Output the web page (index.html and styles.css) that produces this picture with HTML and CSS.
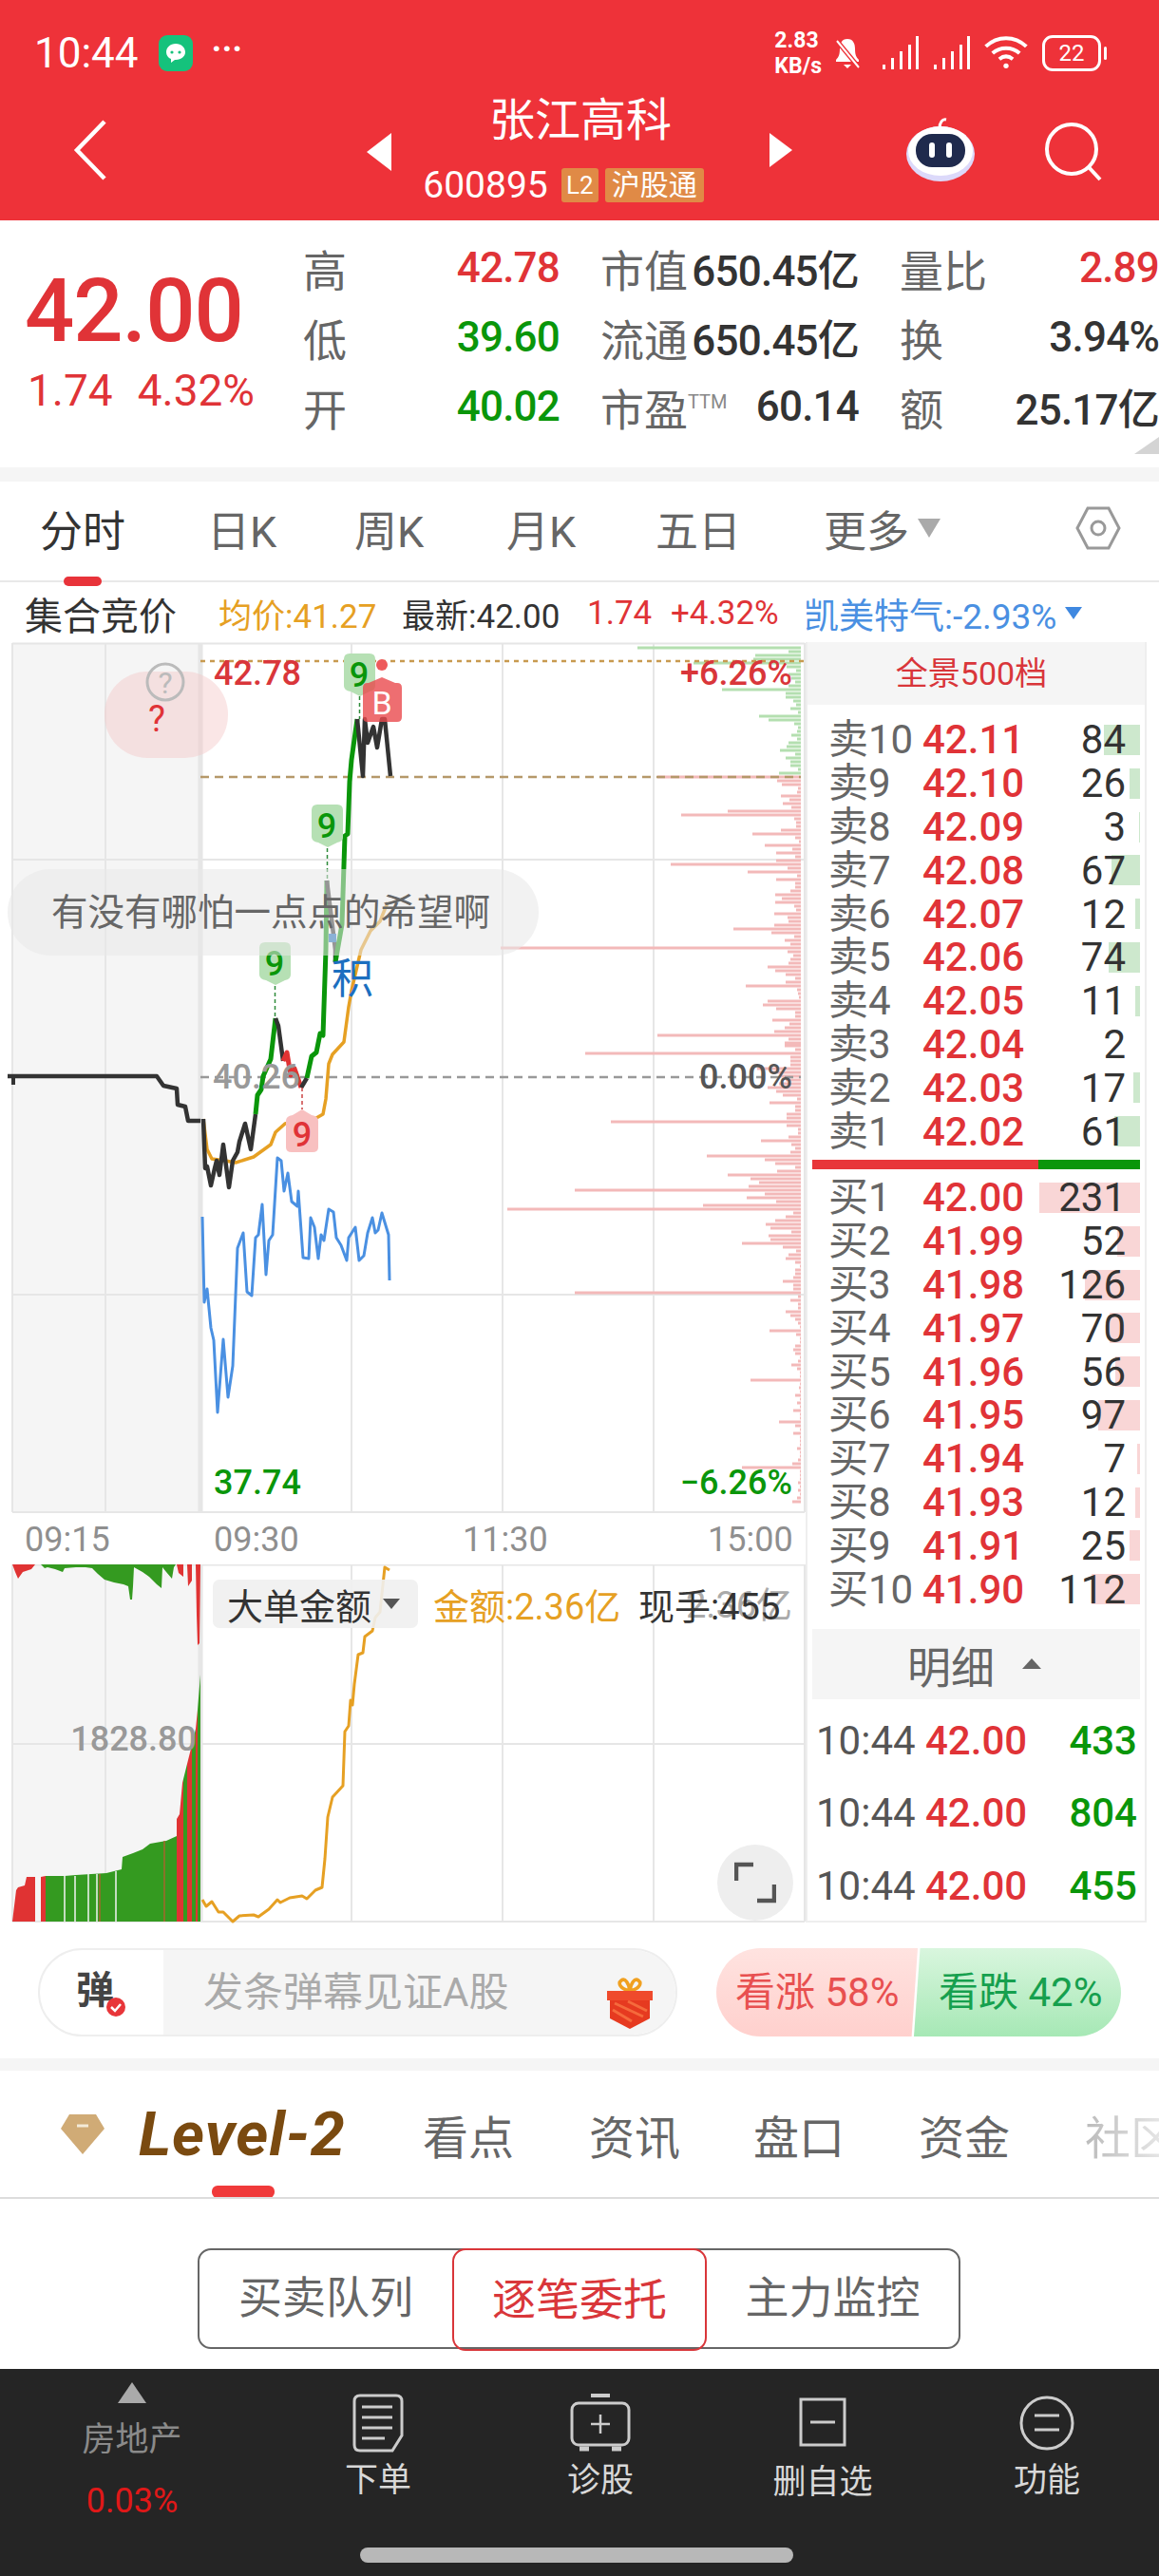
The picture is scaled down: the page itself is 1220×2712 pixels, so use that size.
FILE: index.html
```html
<!DOCTYPE html>
<html lang="zh-CN">
<head>
    <meta charset="UTF-8">
    <meta name="viewport" content="width=device-width, initial-scale=1.0">
    <title>张江高科 600895</title>
    <link rel="stylesheet" href="styles.css">
</head>
<body>
<div id="app">
    <!-- 顶部红色区域 -->
    <header class="top">
        <div class="status">
            <span class="clock">10:44</span>
            <svg class="wechat" width="36" height="38" viewBox="0 0 36 38"><rect width="36" height="38" rx="9" fill="#15c27c"/><path d="M18 9c-6 0-10 4-10 9 0 3 2 6 5 7v4l4-3h1c6 0 10-4 10-8 0-5-4-9-10-9z" fill="#fff"/><circle cx="14" cy="18" r="1.6" fill="#15c27c"/><circle cx="22" cy="18" r="1.6" fill="#15c27c"/></svg>
            <span class="more-dots">···</span>
            <span class="status-right">
                <span class="speed">2.83<br>KB/s</span>
                <svg class="bell" width="30" height="38" viewBox="0 0 30 38"><path d="M15 4c-6 0-8 5-8 10 0 6-1 9-4 12v2h24v-2c-3-3-4-6-4-12 0-5-2-10-8-10zM11 31h8l-4 4z" fill="#fff"/><path d="M4 6l23 28" stroke="#ee3239" stroke-width="5"/><path d="M4 6l23 28" stroke="#fff" stroke-width="2"/></svg>
                <svg class="signal" width="42" height="36" viewBox="0 0 42 36"><path d="M2 30h3v5H2zM11 23h3v12h-3zM20 16h3v19h-3zM29 9h3v26h-3zM37 0h3v35h-3z" fill="#fff"/></svg>
                <svg class="signal" width="42" height="36" viewBox="0 0 42 36"><path d="M2 30h3v5H2zM11 23h3v12h-3zM20 16h3v19h-3zM29 9h3v26h-3zM37 0h3v35h-3z" fill="#fff"/></svg>
                <svg width="48" height="38" viewBox="0 0 54 42" fill="none" stroke="#fff" stroke-width="4.500"><path d="M3 13c14-13 34-13 48 0M11 21c9-8 23-8 32 0M19 28c5-4 11-4 16 0"/><circle cx="27" cy="36" r="3" fill="#fff" stroke="none"/></svg>
                <span class="battery">22</span>
            </span>
        </div>
        <nav class="nav">
            <div class="nav-left">
                <svg width="36" height="64" viewBox="0 0 36 64" fill="none" stroke="#fff" stroke-width="4.500"><path d="M33 2L4 32l29 30"/></svg>
            </div>
            <div class="nav-mid">
                <svg class="arrow" width="26" height="40" viewBox="0 0 26 40"><path d="M26 0v40L0 20z" fill="#fff"/></svg>
                <div class="stock">
                    <div class="stock-name">张江高科</div>
                    <div class="stock-code">600895<span class="badge">L2</span><span class="badge badge-wide">沪股通</span></div>
                </div>
                <svg class="arrow" width="24" height="36" viewBox="0 0 24 36"><path d="M0 0v36l24-18z" fill="#fff"/></svg>
            </div>
            <div class="nav-right">
                <svg class="robot" width="74" height="68" viewBox="0 0 74 68">
                    <path d="M36 12c0-6 3-10 7-9" fill="none" stroke="#fff" stroke-width="3"/>
                    <ellipse cx="37" cy="39" rx="36" ry="29" fill="#dcd9fa"/>
                    <ellipse cx="37" cy="36" rx="34" ry="26" fill="#fff"/>
                    <rect x="11" y="18" width="52" height="35" rx="17" fill="#1f2a4d"/>
                    <rect x="25" y="27" width="6" height="16" rx="3" fill="#fff"/>
                    <rect x="43" y="27" width="6" height="16" rx="3" fill="#fff"/>
                </svg>
                <svg width="64" height="62" viewBox="0 0 64 62" fill="none" stroke="#fff" stroke-width="4"><circle cx="30" cy="28" r="26"/><path d="M48 47l12 13"/></svg>
            </div>
        </nav>
    </header>

    <!-- 报价 -->
    <section class="quote">
        <div class="quote-main">
            <div class="last">42.00</div>
            <div class="change"><span>1.74</span><span>4.32%</span></div>
        </div>
        <div class="quote-grid">
            <div class="cell"><span class="lab">高</span><span class="val up">42.78</span></div>
            <div class="cell"><span class="lab">市值</span><span class="val">650.45亿</span></div>
            <div class="cell"><span class="lab">量比</span><span class="val up">2.89</span></div>
            <div class="cell"><span class="lab">低</span><span class="val down">39.60</span></div>
            <div class="cell"><span class="lab">流通</span><span class="val">650.45亿</span></div>
            <div class="cell"><span class="lab">换</span><span class="val">3.94%</span></div>
            <div class="cell"><span class="lab">开</span><span class="val down">40.02</span></div>
            <div class="cell"><span class="lab">市盈<sup class="ttm">TTM</sup></span><span class="val">60.14</span></div>
            <div class="cell"><span class="lab">额</span><span class="val">25.17亿</span></div>
        </div>
        <i class="corner"></i>
    </section>

    <!-- 周期切换 -->
    <div class="periods">
        <span class="period on">分时</span>
        <span class="period">日K</span>
        <span class="period">周K</span>
        <span class="period">月K</span>
        <span class="period">五日</span>
        <span class="period period-more">更多<i class="caret"></i></span>
        <svg class="hex" width="48" height="46" viewBox="0 0 48 46" fill="none" stroke="#999" stroke-width="3"><path d="M13 2h22l11 21-11 21H13L2 23z"/><circle cx="24" cy="23" r="7"/></svg>
    </div>

    <div class="legend">
        <span class="auction">集合竞价</span>
        <span class="avg">均价:41.27</span>
        <span class="latest">最新:42.00</span>
        <span class="up l-change">1.74</span>
        <span class="up l-pct">+4.32%</span>
        <span class="peer">凯美特气:-2.93%<i class="peer-caret"></i></span>
    </div>

    <div class="board">
        <div class="charts">
            <svg class="price-chart" width="850" height="918" viewBox="0 676 850 918">
                <rect x="13" y="677" width="198" height="915" fill="#f5f5f5"/>
                <!-- 网格 -->
                <path class="grid" d="M13 677.500H847M13 905H847M13 1363H847M13 1592H847M13 677V1592M111 677V1592M370 677V1592M529 677V1592M688 677V1592M847 677V1592"/>
                <path d="M211 677V1592" stroke="#e6e6e6" stroke-width="5"/>
                <!-- 筹码分布 -->
                <path class="depth-green" d="M843 682H671M843 686H830M843 690H795M843 694H793M843 698H730M843 702H828M843 706H838M843 710H830M843 714H833M843 718H837M843 722H830M843 726H760M843 730H827M843 734H827M843 738H835M843 742H838M843 746H832M843 750H840M843 754H799M843 758H809M843 762H836M843 766H840M843 770H839M843 774H833M843 778H839M843 782H830M843 786H828M843 790H821M843 794H837M843 798H827M843 802H832M843 806H832M843 810H840M843 814H820"/>
                <path class="depth-red" d="M843 818H692M843 822H818M843 826H823M843 830H840M843 834H839M843 838H822M843 842H831M843 846H824M843 850H833M843 854H766M843 858H717M843 862H836M843 866H838M843 870H838M843 874H822M843 878H792M843 882H837M843 886H841M843 890H805M843 894H834M843 898H817M843 902H837M843 906H817M843 910H706M843 914H829M843 918H787M843 922H839M843 926H817M843 930H837M843 934H837M843 938H832M843 942H816M843 946H823M843 950H816M843 954H836M843 958H838M843 962H815M843 966H829M843 970H830M843 974H815M843 978H772M843 982H812M843 986H836M843 990H826M843 994H832M843 998H527M843 1002H829M843 1006H835M843 1010H832M843 1014H830M843 1018H808M843 1022H816M843 1026H827M843 1030H837M843 1034H827M843 1038H785M843 1042H839M843 1046H840M843 1050H841M843 1054H808M843 1058H803M843 1062H817M843 1066H837M843 1070H837M843 1074H813M843 1078H831M843 1082H826M843 1086H815M843 1090H692M843 1094H830M843 1098H826M843 1101H826M843 1105H837M843 1109H616M843 1113H832M843 1117H832M843 1121H832M843 1125H797M843 1129H813M843 1133H820M843 1137H827M843 1141H820M843 1145H808M843 1149H817M843 1153H824M843 1157H839M843 1161H810M843 1165H837M843 1169H837M843 1173H828M843 1177H828M843 1181H643M843 1185H828M843 1189H840M843 1193H840M843 1197H830M843 1201H801M843 1205H833M843 1209H837M843 1213H832M843 1217H744M843 1221H805M843 1225H816M843 1229H837M843 1233H818M843 1237H766M843 1241H790M843 1245H799M843 1249H788M843 1253H605M843 1257H805M843 1261H786M843 1265H817M843 1269H740M843 1273H534M843 1277H835M843 1281H827M843 1285H816M843 1289H806M843 1293H811M843 1297H833M843 1301H809M843 1305H811M843 1309H781M843 1313H824M843 1317H838M843 1321H830M843 1325H827M843 1329H837M843 1333H842M843 1337H837M843 1341H837M843 1345H835M843 1349H824M843 1353H835M843 1357H835M843 1361H605M843 1365H840M843 1369H832M843 1373H840M843 1377H840M843 1381H827M843 1385H832M843 1389H837M843 1393H840M843 1397H842M843 1401H810M843 1405H838M843 1409H842M843 1413H842M843 1417H837M843 1421H835M843 1425H837M843 1429H842M843 1433H840M843 1437H833M843 1441H839M843 1445H842M843 1449H842M843 1453H790M843 1457H842M843 1461H841M843 1465H842M843 1469H837M843 1473H842M843 1477H839M843 1481H842M843 1485H835M843 1489H842M843 1493H842M843 1497H820M843 1501H837M843 1505H842M843 1509H835M843 1513H842M843 1517H842M843 1521H842M843 1525H839M843 1529H842M843 1533H842M843 1537H840M843 1541H834M843 1545H781M843 1549H842M843 1553H842M843 1557H842M843 1561H840M843 1565H842M843 1569H840M843 1573H842M843 1577H839M843 1581H834"/>
                <!-- 参考线 -->
                <path d="M211 696H853" stroke="#c89a4f" stroke-width="2.500" stroke-dasharray="5 5"/>
                <path d="M211 818H843" stroke="#b5986a" stroke-width="2.500" stroke-dasharray="9 6"/>
                <path d="M211 1134H843" stroke="#999" stroke-width="2.500" stroke-dasharray="9 6"/>
                <!-- 资金线 -->
                <polyline class="line-blue" points="213,1281 215,1371 218,1357 222,1398 225,1411 229,1487 235,1410 240,1471 245,1438 250,1314 256,1298 260,1360 265,1364 269,1303 272,1300 276,1268 280,1342 283,1306 287,1300 292,1219 296,1222 299,1254 303,1235 307,1265 313,1270 314,1254 319,1324 325,1325 327,1282 331,1292 335,1325 338,1300 341,1306 346,1273 351,1276 354,1303 359,1311 365,1327 367,1303 374,1292 378,1327 383,1322 387,1298 392,1282 395,1298 398,1295 402,1277 409,1300 410,1348"/>
                <!-- 均价线 -->
                <polyline class="line-avg" points="214,1178 218,1210 223,1220 237,1222 248,1224 267,1218 285,1205 290,1192 300,1183 313,1180 333,1177 340,1173 343,1157 346,1120 350,1110 362,1097 367,1060 370,1043 380,1000 390,980 400,970 408,950"/>
                <!-- 分时线 -->
                <polyline class="line-black" points="8,1133 14,1133 137,1133 165,1133 172,1143 186,1146 187,1163 195,1165 198,1180 211,1180"/>
                <path d="M14 1133v9" stroke="#333" stroke-width="4"/>
                <polyline class="line-black" points="214,1178 216,1230 218,1228 222,1248 226,1230 228,1222 231,1237 235,1205 241,1250 245,1222 250,1213 252,1202 258,1183 264,1210 269,1173"/>
                <polyline class="line-green" points="269,1173 271,1153 275,1147 277,1133 285,1115 290,1072"/>
                <polyline class="line-black" points="290,1072 293,1080 298,1117"/>
                <polyline class="line-red" points="298,1117 302,1108 306,1132 310,1125 317,1145"/>
                <polyline class="line-black" points="317,1145 323,1135"/>
                <polyline class="line-green" points="323,1135 328,1112 333,1108 337,1088 340,1090 343,1000 344,927"/>
                <polyline class="line-black" points="344,927 353,1000 353,1013"/>
                <polyline class="line-green" points="353,1013 360,973 363,880 366,878 368,823 370,800 376,757"/>
                <polyline class="line-black" points="376,757 382,817 384,757 387,782 393,765 397,787 402,757 405,757 411,817"/>
                <rect x="346" y="983" width="8" height="9" fill="#1c6fc0"/>
                <!-- 价格刻度 -->
                <text class="axis up-fill" x="225" y="721">42.78</text>
                <text class="axis grey-fill" x="224" y="1146">40.26</text>
                <text class="axis down-fill" x="225" y="1573">37.74</text>
                <text class="axis up-fill" x="834" y="721" text-anchor="end">+6.26%</text>
                <text class="axis dark-fill" x="834" y="1146" text-anchor="end">0.00%</text>
                <text class="axis down-fill" x="834" y="1573" text-anchor="end">−6.26%</text>
                <!-- 买卖标记 -->
                <g class="tag-green">
                    <path d="M368 688h21q6 0 6 6v28q0 5-6 6l-10 5-10-5q-7-1-7-6v-28q0-6 6-6z"/>
                    <path class="tag-stem" d="M378.500 733V757"/>
                    <text x="378" y="723">9</text>
                </g>
                <g class="tag-green">
                    <path d="M334 847h21q6 0 6 6v28q0 5-6 6l-10 5-10-5q-7-1-7-6v-28q0-6 6-6z"/>
                    <path class="tag-stem" d="M344.500 893V927"/>
                    <text x="344" y="882">9</text>
                </g>
                <g class="tag-green">
                    <path d="M279 992h21q6 0 6 6v28q0 5-6 6l-10 5-10-5q-7-1-7-6v-28q0-6 6-6z"/>
                    <path class="tag-stem" d="M289.500 1038V1072"/>
                    <text x="289" y="1027">9</text>
                </g>
                <g class="tag-red">
                    <path class="tag-stem" d="M318 1145V1168"/>
                    <path d="M318 1168l10 6q7 1 7 6v28q0 5-6 5h-22q-6 0-6-5v-28q0-5 7-6z"/>
                    <text x="318" y="1207">9</text>
                </g>
                <circle cx="402" cy="700" r="6" fill="#ee5a5c"/>
                <path d="M388 719l14-6 14 6h2q5 0 5 5v31q0 5-5 5h-31q-5 0-5-5v-31q0-5 5-5z" fill="#ea4a4e" fill-opacity=".8"/>
                <text class="tag-b" x="402" y="752">B</text>
                <text class="ji" x="349" y="1046">积</text>
                <!-- 问号气泡 -->
                <rect x="110" y="707" width="130" height="91" rx="45" fill="#f5c8c8" fill-opacity=".45"/>
                <circle cx="174" cy="718" r="19" fill="none" stroke="#bbb" stroke-width="3"/>
                <text class="ask-grey" x="174" y="730">?</text>
                <text class="ask-red" x="165" y="770">?</text>
            </svg>
            <div class="toast">有没有哪怕一点点的希望啊</div>

            <div class="times">
                <span class="t-first">09:15</span>
                <span class="t-open">09:30</span>
                <span class="t-noon">11:30</span>
                <span class="t-close">15:00</span>
            </div>

            <div class="sub-wrap">
                <svg class="sub-chart" width="850" height="380" viewBox="0 1647 850 380">
                    <rect x="13" y="1647" width="198" height="376" fill="#f5f5f5"/>
                    <path class="grid" d="M13 1647.500H847M13 1836H847M13 2023H847M13 1647V2023M111 1647V2023M370 1647V2023M529 1647V2023M688 1647V2023M847 1647V2023"/>
                    <path d="M211 1647V2023" stroke="#e6e6e6" stroke-width="5"/>
                    <!-- 竞价量柱 -->
                    <path fill="#e03333" d="M13 2023L17 1990 19 1987 26 1985 28 1976 37 1976 37 2023zM43 1976L48 1975 48 2023 43 2023zM186 1915L189 1910 192 1877 193 1873 193 2023 186 2023zM197 1857L202 1837 202 2023 197 2023zM206 1820L208 1800 208 2023 206 2023zM17 1647L37 1647 33 1652 24 1655 19 1662 16 1655 13 1647z"/>
                    <path fill="#349a20" d="M48 1975L60 1975 68 1975 80 1974 112 1972 128 1968 129 1955 140 1951 150 1947 158 1941 175 1938 186 1933 186 2023 48 2023zM193 1873L197 1857 197 2023 193 2023zM202 1837L206 1820 206 2023 202 2023zM208 1800L211 1763 211 2023 208 2023z"/>
                    <path fill="#349a20" d="M43 1647L47 1651 50 1650 58 1652 66 1655 68 1651 80 1650 90 1650 97 1651 103 1657 110 1663 120 1666 130 1668 135 1670 137 1684 139 1684 140 1670 141 1650 150 1655 157 1660 165 1668 170 1672 171 1650 175 1655 181 1662 183 1650 185 1647z"/>
                    <path fill="#e03333" d="M186 1647L193 1647 193 1660 188 1656zM197 1647L202 1647 202 1664 198 1670zM206 1647L211 1647 210 1730 208 1732 207 1700z"/>
                    <path d="M68 1975V2023M79 1975V2023M93 1973V2023M102 1973V2023M122 1970V2023" stroke="#f3f3f3" stroke-width="1.500"/>
                    <path d="M173 1938V2023M105 1973V2023" stroke="#a4672c" stroke-width="1.500"/>
                    <polyline class="line-amount" points="213,2000 217,2007 223,2002 230,2013 235,2013 245,2023 252,2017 267,2016 272,2018 283,2010 292,2000 295,2003 305,1998 318,1996 323,1999 332,1990 339,1987 342,1957 345,1913 350,1892 361,1880 363,1823 367,1817 369,1790 371,1795 373,1773 377,1742 382,1740 384,1723 392,1717 395,1703 400,1697 405,1650 410,1653"/>
                    <text class="axis grey-fill" x="207" y="1843" text-anchor="end">1828.80</text>
                </svg>
                <div class="sub-legend">
                    <span class="sub-select">大单金额<i class="sub-caret"></i></span>
                    <span class="sub-amount">金额:2.36亿</span>
                    <span class="sub-hand">现手:455<b class="ghost">2.36亿</b></span>
                </div>
                <div class="expand">
                    <svg width="44" height="44" viewBox="0 0 44 44" fill="none" stroke="#555" stroke-width="4.500"><path d="M2 20V3h18M42 24v17H24"/></svg>
                </div>
            </div>
        </div>

        <!-- 五档 -->
        <aside class="book">
            <div class="book-head">全景500档</div>
            <div class="rows sell">
                <div class="row"><i class="bar" style="width:38px"></i><span class="r-lab">卖10</span><span class="r-price">42.11</span><span class="r-qty">84</span></div>
                <div class="row"><i class="bar" style="width:11px"></i><span class="r-lab">卖9</span><span class="r-price">42.10</span><span class="r-qty">26</span></div>
                <div class="row"><i class="bar" style="width:1px"></i><span class="r-lab">卖8</span><span class="r-price">42.09</span><span class="r-qty">3</span></div>
                <div class="row"><i class="bar" style="width:30px"></i><span class="r-lab">卖7</span><span class="r-price">42.08</span><span class="r-qty">67</span></div>
                <div class="row"><i class="bar" style="width:5px"></i><span class="r-lab">卖6</span><span class="r-price">42.07</span><span class="r-qty">12</span></div>
                <div class="row"><i class="bar" style="width:33px"></i><span class="r-lab">卖5</span><span class="r-price">42.06</span><span class="r-qty">74</span></div>
                <div class="row"><i class="bar" style="width:5px"></i><span class="r-lab">卖4</span><span class="r-price">42.05</span><span class="r-qty">11</span></div>
                <div class="row"><span class="r-lab">卖3</span><span class="r-price">42.04</span><span class="r-qty">2</span></div>
                <div class="row"><i class="bar" style="width:7px"></i><span class="r-lab">卖2</span><span class="r-price">42.03</span><span class="r-qty">17</span></div>
                <div class="row"><i class="bar" style="width:27px"></i><span class="r-lab">卖1</span><span class="r-price">42.02</span><span class="r-qty">61</span></div>
            </div>
            <div class="ratio"><i class="ratio-buy"></i><i class="ratio-sell"></i></div>
            <div class="rows buy">
                <div class="row"><i class="bar" style="width:106px"></i><span class="r-lab">买1</span><span class="r-price">42.00</span><span class="r-qty">231</span></div>
                <div class="row"><i class="bar" style="width:24px"></i><span class="r-lab">买2</span><span class="r-price">41.99</span><span class="r-qty">52</span></div>
                <div class="row"><i class="bar" style="width:58px"></i><span class="r-lab">买3</span><span class="r-price">41.98</span><span class="r-qty">126</span></div>
                <div class="row"><i class="bar" style="width:32px"></i><span class="r-lab">买4</span><span class="r-price">41.97</span><span class="r-qty">70</span></div>
                <div class="row"><i class="bar" style="width:26px"></i><span class="r-lab">买5</span><span class="r-price">41.96</span><span class="r-qty">56</span></div>
                <div class="row"><i class="bar" style="width:44px"></i><span class="r-lab">买6</span><span class="r-price">41.95</span><span class="r-qty">97</span></div>
                <div class="row"><i class="bar" style="width:3px"></i><span class="r-lab">买7</span><span class="r-price">41.94</span><span class="r-qty">7</span></div>
                <div class="row"><i class="bar" style="width:5px"></i><span class="r-lab">买8</span><span class="r-price">41.93</span><span class="r-qty">12</span></div>
                <div class="row"><i class="bar" style="width:11px"></i><span class="r-lab">买9</span><span class="r-price">41.91</span><span class="r-qty">25</span></div>
                <div class="row"><i class="bar" style="width:51px"></i><span class="r-lab">买10</span><span class="r-price">41.90</span><span class="r-qty">112</span></div>
            </div>
            <div class="detail-head">明细<i class="detail-caret"></i></div>
            <div class="detail"><span class="d-time">10:44</span><span class="d-price">42.00</span><span class="d-vol">433</span></div>
            <div class="detail"><span class="d-time">10:44</span><span class="d-price">42.00</span><span class="d-vol">804</span></div>
            <div class="detail"><span class="d-time">10:44</span><span class="d-price">42.00</span><span class="d-vol">455</span></div>
        </aside>
    </div>

    <!-- 弹幕 + 看涨看跌 -->
    <div class="comment">
        <div class="danmu">
            <div class="danmu-tag">弹
                <svg class="danmu-check" width="20" height="20" viewBox="0 0 20 20"><circle cx="10" cy="10" r="10" fill="#e8363a"/><path d="M5 10l4 4 6-7" fill="none" stroke="#fff" stroke-width="2.500"/></svg>
            </div>
            <div class="danmu-input">发条弹幕见证A股
                <svg class="gift" width="52" height="54" viewBox="0 0 52 54">
                    <path d="M26 14c-10-2-13-8-9-11 4-3 8 3 9 11zM26 14c10-2 13-8 9-11-4-3-8 3-9 11z" fill="none" stroke="#f0a020" stroke-width="3.500"/>
                    <path d="M2 14h48v10H2z" fill="#ef4a2c"/>
                    <path d="M5 24h42v19l-21 11-21-11z" fill="#e63a20"/>
                    <path d="M10 27l30 14M8 34l20 12M24 25l20 10" stroke="#f56a3c" stroke-width="3"/>
                </svg>
            </div>
        </div>
        <div class="vote">
            <span class="vote-up">看涨 58%</span>
            <span class="vote-down">看跌 42%</span>
        </div>
    </div>

    <!-- 底部资讯 tab -->
    <div class="info-tabs">
        <svg class="gem" width="48" height="44" viewBox="0 0 48 44"><path d="M10 1h28l9 15-23 27L1 16z" fill="#d0ab76"/><path d="M18 13h12" stroke="#f4ead8" stroke-width="3"/></svg>
        <span class="level2">Level-2</span>
        <span class="info-tab">看点</span>
        <span class="info-tab">资讯</span>
        <span class="info-tab">盘口</span>
        <span class="info-tab">资金</span>
        <span class="info-tab info-tab-fade">社区</span>
    </div>

    <div class="segment-wrap">
        <div class="segment">
            <span class="seg">买卖队列</span>
            <span class="seg seg-on">逐笔委托</span>
            <span class="seg">主力监控</span>
        </div>
    </div>

    <!-- 底部栏 -->
    <footer class="toolbar">
        <div class="tool tool-sector">
            <i class="sector-up"></i>
            <span class="sector-name">房地产</span>
            <span class="sector-pct">0.03%</span>
        </div>
        <div class="tool">
            <svg width="54" height="62" viewBox="0 0 54 62" fill="none" stroke="#ccc" stroke-width="3"><path d="M8 2h38q6 0 6 6v36l-10 16H8q-6 0-6-6V8q0-6 6-6z"/><path d="M10 14h32M10 25h32M10 36h32M10 47h24"/></svg>
            <span class="tool-label">下单</span>
        </div>
        <div class="tool">
            <svg width="64" height="62" viewBox="0 0 64 62" fill="none" stroke="#ccc" stroke-width="3"><path d="M22 2h20" stroke-width="4"/><rect x="2" y="10" width="60" height="44" rx="7"/><path d="M32 22v20M22 32h20" stroke-width="2.500"/><path d="M10 58h10M44 58h10" stroke-width="5"/></svg>
            <span class="tool-label">诊股</span>
        </div>
        <div class="tool">
            <svg width="50" height="52" viewBox="0 0 50 52" fill="none" stroke="#ccc" stroke-width="3" class="icon-drop"><rect x="2" y="2" width="46" height="48"/><path d="M12 26h26"/></svg>
            <span class="tool-label">删自选</span>
        </div>
        <div class="tool">
            <svg class="icon-func" width="58" height="58" viewBox="0 0 58 58" fill="none" stroke="#ccc" stroke-width="3"><circle cx="29" cy="29" r="27"/><path d="M16 21h26M16 36h26"/></svg>
            <span class="tool-label">功能</span>
        </div>
        <i class="home-pill"></i>
    </footer>
</div>
</body>
</html>
```

FILE: styles.css
```css
/* 基础 */
body {
    margin: 0;
    background: #fff;
    font-family: Roboto, "Noto Sans CJK SC", sans-serif;
    color: #333;
}

#app {
    width: 1220px;
    height: 2712px;
    overflow: hidden;
    position: relative;
}

i {
    display: block;
}

.up { color: #e03337; }
.down { color: #0a960a; }

/* 顶部 */
.top {
    height: 232px;
    background: #ee3239;
    color: #fff;
}

.status {
    height: 100px;
    display: flex;
    align-items: center;
    padding: 12px 61px 0 36px;
    box-sizing: border-box;
}

.clock {
    font-size: 44px;
    line-height: 48px;
}

.wechat {
    margin-left: 21px;
}

.more-dots {
    margin-left: 20px;
    font-size: 36px;
    font-weight: 700;
    line-height: 36px;
    margin-top: -8px;
}

.status-right {
    margin-left: auto;
    display: flex;
    align-items: center;
    gap: 12px;
}

.speed {
    font-size: 23px;
    line-height: 27px;
    font-weight: 700;
    text-align: left;
}

.bell {
    margin-right: 8px;
}

.battery {
    width: 56px;
    height: 32px;
    border: 3px solid #fff;
    border-radius: 11px;
    font-size: 24px;
    line-height: 32px;
    text-align: center;
    position: relative;
    margin-left: 2px;
}

.battery::after {
    content: "";
    position: absolute;
    right: -9px;
    top: 9px;
    width: 3px;
    height: 14px;
    background: #fff;
    border-radius: 2px;
}

.nav {
    height: 132px;
    display: grid;
    grid-template-columns: 386px 448px 386px;
}

.nav-left {
    padding: 26px 0 0 77px;
}

.nav-mid {
    display: flex;
    justify-content: space-between;
    align-items: flex-start;
}

.arrow {
    margin-top: 40px;
}

.stock {
    text-align: center;
}

.stock-name {
    font-size: 48px;
    line-height: 54px;
}

.stock-code {
    margin-top: 22px;
    height: 38px;
    padding-right: 36px;
    display: flex;
    align-items: center;
    font-size: 39px;
    line-height: 38px;
    white-space: nowrap;
}

.badge {
    margin-left: 14px;
    width: 39px;
    height: 36px;
    background: #e08a46;
    border-radius: 3px;
    font-size: 26px;
    line-height: 36px;
    text-align: center;
}

.badge-wide {
    margin-left: 7px;
    width: 104px;
    font-size: 30px;
}

.nav-right {
    display: flex;
    justify-content: flex-end;
    align-items: flex-start;
    gap: 71px;
    padding: 23px 58px 0 0;
}

.nav-right svg:last-child {
    margin-top: 6px;
}

/* 报价 */
.quote {
    height: 260px;
    display: flex;
    position: relative;
    border-bottom: 15px solid #f5f5f5;
    box-sizing: content-box;
}

.quote-main {
    width: 320px;
    padding: 44px 0 0 26px;
    box-sizing: border-box;
    color: #e03337;
}

.last {
    font-size: 92px;
    line-height: 104px;
    font-weight: 500;
    letter-spacing: -1px;
}

.change {
    display: flex;
    gap: 26px;
    margin-top: 6px;
    padding-left: 3px;
    font-size: 46px;
    line-height: 50px;
}

.quote-grid {
    display: grid;
    grid-template-columns: 270px 272px 273px;
    grid-auto-rows: 73px;
    column-gap: 43px;
    padding-top: 13px;
}

.cell {
    display: flex;
    justify-content: space-between;
    align-items: center;
    white-space: nowrap;
}

.lab {
    font-size: 46px;
    color: #666;
}

.val {
    font-size: 44px;
    font-weight: 500;
    letter-spacing: -0.8px;
}

.ttm {
    font-size: 20px;
    color: #888;
    vertical-align: 18px;
    line-height: 0;
}

.corner {
    position: absolute;
    right: 0;
    bottom: 14px;
    border-left: 26px solid transparent;
    border-bottom: 18px solid #d4d4d4;
}

/* 周期切换 */
.periods {
    height: 106px;
    box-sizing: border-box;
    border-bottom: 2px solid #e8e8e8;
    padding: 0 0 6px 42px;
    display: grid;
    grid-template-columns: 176px 155px 160px 157px 177px 265px 48px;
    align-items: center;
    font-size: 45px;
    color: #666;
    position: relative;
}

.period {
    white-space: nowrap;
}

.period.on {
    color: #333;
    position: relative;
}

.period.on::after {
    content: "";
    position: absolute;
    left: 25px;
    bottom: -28px;
    width: 40px;
    height: 10px;
    border-radius: 5px;
    background: #e8333a;
}

.period-more {
    display: flex;
    align-items: center;
    gap: 9px;
}

.caret {
    border-left: 12px solid transparent;
    border-right: 12px solid transparent;
    border-top: 20px solid #aaa;
}

.legend {
    height: 63px;
    display: flex;
    align-items: center;
    font-size: 35px;
    padding: 2px 0 0 26px;
    box-sizing: border-box;
    white-space: nowrap;
}

.auction {
    font-size: 40px;
    width: 204px;
    color: #333;
}

.avg {
    color: #e6a023;
    width: 193px;
}

.latest {
    width: 195px;
}

.l-change {
    width: 88px;
}

.l-pct {
    width: 140px;
}

.peer {
    color: #4a90e2;
    display: flex;
    align-items: center;
    gap: 9px;
    font-size: 37px;
}

.peer-caret {
    border-left: 9px solid transparent;
    border-right: 9px solid transparent;
    border-top: 13px solid #3f88e0;
}

/* 分时图 */
.board {
    display: flex;
    height: 1351px;
}

.charts {
    width: 848px;
    position: relative;
}

.price-chart,
.sub-chart {
    display: block;
}

.grid {
    stroke: #e6e6e6;
    stroke-width: 2;
    fill: none;
}

.depth-green {
    stroke: #b4dfb0;
    stroke-width: 3;
    fill: none;
}

.depth-red {
    stroke: #f3b9b9;
    stroke-width: 3;
    fill: none;
}

polyline {
    fill: none;
    stroke-linejoin: round;
}

.line-blue { stroke: #4a90e2; stroke-width: 3; }
.line-avg { stroke: #e6a023; stroke-width: 3.5; }
.line-amount { stroke: #e6a023; stroke-width: 3; }
.line-black { stroke: #333; stroke-width: 4.5; }
.line-green { stroke: #0a960a; stroke-width: 5; }
.line-red { stroke: #e03333; stroke-width: 5; }

.axis {
    font-size: 36px;
    font-weight: 500;
}

.up-fill { fill: #d9363a; }
.down-fill { fill: #0a960a; }
.grey-fill { fill: #999; }
.dark-fill { fill: #555; }

.tag-green path {
    fill: #b6e0b4;
}

.tag-red path {
    fill: #f8c0c0;
}

.tag-green text,
.tag-red text {
    font-size: 36px;
    font-weight: 500;
    text-anchor: middle;
}

.tag-green text { fill: #0a960a; }
.tag-red text { fill: #e03337; }

.tag-green .tag-stem {
    fill: none;
    stroke: #2e8b3a;
    stroke-width: 1.5;
    stroke-dasharray: 4 3;
}

.tag-red .tag-stem {
    fill: none;
    stroke: #c44;
    stroke-width: 1.5;
    stroke-dasharray: 4 3;
}

.tag-b {
    font-size: 34px;
    fill: #fff;
    text-anchor: middle;
}

.ji {
    font-size: 44px;
    fill: #1c6fc0;
}

.ask-grey {
    font-size: 32px;
    fill: #bbb;
    text-anchor: middle;
}

.ask-red {
    font-size: 38px;
    fill: #e03337;
    text-anchor: middle;
}

/* 飘过的弹幕 */
.toast {
    position: absolute;
    left: 8px;
    top: 239px;
    width: 559px;
    height: 91px;
    border-radius: 46px;
    background: rgba(232, 232, 232, 0.55);
    font-size: 38.500px;
    line-height: 91px;
    color: #666;
    padding-left: 46px;
    box-sizing: border-box;
    white-space: nowrap;
}

.times {
    height: 53px;
    display: grid;
    grid-template-columns: 199px 262px 258px 1fr;
    padding-left: 26px;
    align-items: center;
    font-size: 36px;
    color: #8f8f8f;
    margin-top: 0;
}

.sub-wrap {
    position: relative;
    height: 380px;
}

.sub-legend {
    position: absolute;
    left: 224px;
    top: 14px;
    display: flex;
    align-items: center;
    white-space: nowrap;
    font-size: 38px;
}

.sub-select {
    width: 216px;
    height: 51px;
    box-sizing: border-box;
    padding-left: 15px;
    border-radius: 7px;
    background: rgba(240, 240, 240, 0.9);
    display: flex;
    align-items: center;
    gap: 12px;
    color: #333;
}

.sub-caret {
    border-left: 9px solid transparent;
    border-right: 9px solid transparent;
    border-top: 11px solid #555;
}

.sub-amount {
    margin-left: 16px;
    color: #e6a023;
    width: 216px;
}

.sub-hand {
    position: relative;
    color: #333;
    font-size: 38px;
}

.ghost {
    position: absolute;
    left: 50px;
    top: -2px;
    font-weight: 400;
    color: #aaa;
    z-index: -1;
}

.expand {
    position: absolute;
    left: 755px;
    top: 295px;
    width: 80px;
    height: 80px;
    border-radius: 50%;
    background: #eee;
    display: flex;
    align-items: center;
    justify-content: center;
}

/* 五档盘口 */
.book {
    width: 359px;
    height: 1348px;
    box-sizing: border-box;
    border: 2px solid #eee;
    border-top: 0;
    border-bottom: 2px solid #eee;
    padding: 0 5px;
    position: relative;
}

.book-head {
    margin: 0 -5px;
    height: 66px;
    line-height: 66px;
    background: #f5f5f5;
    text-align: center;
    font-size: 34px;
    color: #d9363a;
    padding-right: 10px;
}

.rows {
    padding-top: 14px;
}

.row {
    height: 45.800px;
    display: grid;
    grid-template-columns: 99px 1fr auto;
    align-items: center;
    font-size: 42px;
    line-height: 45px;
    padding: 0 15px 0 17px;
    position: relative;
    white-space: nowrap;
}

.r-lab {
    color: #666;
    position: relative;
}

.r-price {
    color: #e03337;
    position: relative;
    font-weight: 500;
}

.r-qty {
    position: relative;
}

.bar {
    position: absolute;
    right: 0;
    top: 7px;
    height: 32px;
}

.sell .bar { background: #cde8cd; }
.buy .bar { background: #f9d6d6; }

.ratio {
    display: flex;
    height: 10px;
    margin-top: 7px;
}

.ratio-buy {
    width: 238px;
    background: #e8363a;
}

.ratio-sell {
    flex: 1;
    background: #0a960a;
}

.buy {
    padding-top: 7px;
}

.detail-head {
    margin-top: 19px;
    height: 74px;
    background: #f5f5f5;
    display: flex;
    align-items: center;
    font-size: 46px;
    color: #666;
    padding-left: 100px;
}

.detail-caret {
    margin-left: 29px;
    border-left: 10px solid transparent;
    border-right: 10px solid transparent;
    border-bottom: 11px solid #666;
}

.detail {
    height: 76.500px;
    display: grid;
    grid-template-columns: 115px 1fr auto;
    align-items: center;
    font-size: 42px;
    padding: 10px 3px 0 4px;
    box-sizing: border-box;
    white-space: nowrap;
}

.d-time { color: #555; }
.d-price { color: #e03337; font-weight: 500; }
.d-vol { color: #0a960a; font-weight: 500; }

/* 弹幕栏 */
.comment {
    height: 134px;
    box-sizing: border-box;
    padding: 24px 40px 0;
    display: flex;
    align-items: flex-start;
    gap: 41px;
}

.danmu {
    width: 673px;
    height: 93px;
    box-sizing: border-box;
    border: 2px solid #eee;
    border-radius: 47px;
    display: flex;
    overflow: hidden;
}

.danmu-tag {
    width: 130px;
    padding-left: 38px;
    box-sizing: border-box;
    font-size: 40px;
    font-weight: 700;
    line-height: 86px;
    color: #444;
    position: relative;
}

.danmu-check {
    position: absolute;
    left: 70px;
    top: 50px;
}

.danmu-input {
    flex: 1;
    background: #f5f5f5;
    font-size: 42px;
    line-height: 90px;
    color: #aaa;
    padding-left: 42px;
    position: relative;
}

.gift {
    position: absolute;
    right: 22px;
    top: 29px;
}

.vote {
    display: flex;
    width: 426px;
    height: 93px;
    border-radius: 47px;
    overflow: hidden;
    font-size: 42px;
    line-height: 93px;
    white-space: nowrap;
}

.vote-up {
    width: 212px;
    padding-left: 20px;
    box-sizing: border-box;
    color: #e85050;
    background: linear-gradient(#ffe3e0, #ffd0cd);
    clip-path: polygon(0 0, 100% 0, 97% 100%, 0 100%);
}

.vote-down {
    flex: 1;
    margin-left: -4px;
    padding-left: 26px;
    color: #16a04e;
    background: linear-gradient(#d9f6de, #a6e8b5);
    clip-path: polygon(3% 0, 100% 0, 100% 100%, 0 100%);
}

/* 资讯 tab */
.info-tabs {
    margin-top: 6px;
    border-top: 13px solid #f5f5f5;
    height: 133px;
    box-sizing: content-box;
    border-bottom: 2px solid #ddd;
    display: grid;
    grid-template-columns: 146px 299px 175px 173px 174px 175px 1fr;
    align-items: center;
    font-size: 48px;
    color: #666;
    padding-left: 0;
    white-space: nowrap;
    position: relative;
    overflow: hidden;
}

.gem {
    margin-left: 63px;
}

.level2 {
    font-size: 65px;
    line-height: 70px;
    font-weight: 700;
    font-style: italic;
    color: #7a4a10;
    letter-spacing: 1px;
    position: relative;
}

.level2::after {
    content: "";
    position: absolute;
    left: 77px;
    bottom: -32px;
    width: 66px;
    height: 13px;
    border-radius: 6px;
    background: #f03a3a;
}

.info-tab-fade {
    background: linear-gradient(90deg, #bbb, #eee);
    -webkit-background-clip: text;
    background-clip: text;
    color: transparent;
}

/* 分段按钮 */
.segment-wrap {
    height: 179px;
    padding-top: 52px;
    padding-left: 208px;
    box-sizing: border-box;
}

.segment {
    width: 803px;
    height: 106px;
    box-sizing: border-box;
    border: 2px solid #666;
    border-radius: 14px;
    display: grid;
    grid-template-columns: 266px 268px 1fr;
    font-size: 46px;
    line-height: 100px;
    color: #666;
    text-align: center;
}

.seg-on {
    color: #d9363a;
    border: 2px solid #d9363a;
    border-radius: 14px;
    margin: -2px 0;
    line-height: 104px;
}

/* 底部栏 */
.toolbar {
    height: 218px;
    background: #252525;
    display: grid;
    grid-template-columns: 278px 240px 228px 240px 232px;
    position: relative;
}

.tool {
    display: flex;
    flex-direction: column;
    align-items: center;
    justify-content: flex-start;
    padding-top: 26px;
    height: 170px;
    box-sizing: border-box;
}

.icon-drop {
    margin: 4px 0 8px;
}

.icon-func {
    margin: 2px 0 2px;
}

.tool-label {
    margin-top: 6px;
    font-size: 35px;
    line-height: 48px;
    color: #d8d8d8;
    white-space: nowrap;
}

.tool-sector {
    padding-top: 14px;
}

.sector-up {
    border-left: 15px solid transparent;
    border-right: 15px solid transparent;
    border-bottom: 22px solid #aaa;
}

.sector-name {
    margin-top: 15px;
    font-size: 35px;
    line-height: 48px;
    color: #8a8a8a;
}

.sector-pct {
    margin-top: 16px;
    font-size: 36px;
    line-height: 48px;
    color: #e01818;
}

.home-pill {
    position: absolute;
    left: 379px;
    top: 188px;
    width: 456px;
    height: 16px;
    border-radius: 8px;
    background: #b8b8b8;
}
```
